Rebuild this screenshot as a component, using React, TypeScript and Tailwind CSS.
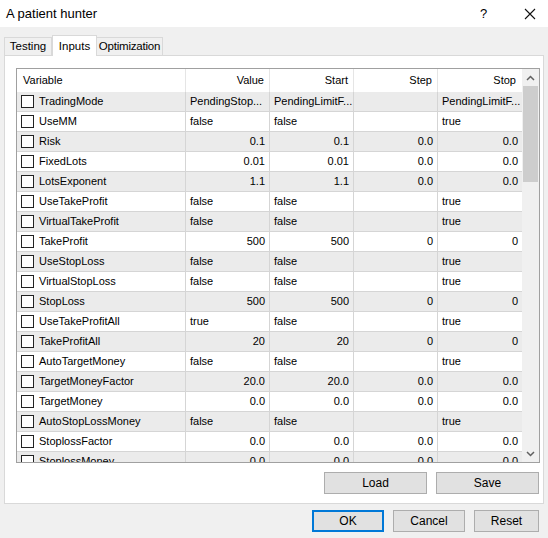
import React from "react";

type Row = [string, string, string, string, string];

const rows: Row[] = [
  ["TradingMode", "PendingStop...", "PendingLimitF...", "", "PendingLimitF..."],
  ["UseMM", "false", "false", "", "true"],
  ["Risk", "0.1", "0.1", "0.0", "0.0"],
  ["FixedLots", "0.01", "0.01", "0.0", "0.0"],
  ["LotsExponent", "1.1", "1.1", "0.0", "0.0"],
  ["UseTakeProfit", "false", "false", "", "true"],
  ["VirtualTakeProfit", "false", "false", "", "true"],
  ["TakeProfit", "500", "500", "0", "0"],
  ["UseStopLoss", "false", "false", "", "true"],
  ["VirtualStopLoss", "false", "false", "", "true"],
  ["StopLoss", "500", "500", "0", "0"],
  ["UseTakeProfitAll", "true", "false", "", "true"],
  ["TakeProfitAll", "20", "20", "0", "0"],
  ["AutoTargetMoney", "false", "false", "", "true"],
  ["TargetMoneyFactor", "20.0", "20.0", "0.0", "0.0"],
  ["TargetMoney", "0.0", "0.0", "0.0", "0.0"],
  ["AutoStopLossMoney", "false", "false", "", "true"],
  ["StoplossFactor", "0.0", "0.0", "0.0", "0.0"],
  ["StoplossMoney", "0.0", "0.0", "0.0", "0.0"],
];

const isNum = (v: string) => /^[0-9.]+$/.test(v);

function Cell({ v, w, last }: { v: string; w: string; last?: boolean }) {
  return (
    <div
      className={`${w} shrink-0 h-full flex items-center px-[4px] overflow-hidden whitespace-nowrap ${
        last ? "" : "border-r border-[#d5d5d5]"
      } ${isNum(v) ? "justify-end" : "justify-start"}`}
    >
      {v}
    </div>
  );
}

function Btn({ label, primary, w }: { label: string; primary?: boolean; w: string }) {
  return (
    <button
      className={`${w} h-[22px] flex items-center justify-center bg-[#e1e1e1] text-[12px] text-black ${
        primary ? "border-2 border-[#0078d7]" : "border border-[#adadad]"
      }`}
    >
      {label}
    </button>
  );
}

export default function App() {
  return (
    <div
      className="w-[548px] h-[538px] bg-[#f0f0f0] flex flex-col text-black overflow-hidden"
      style={{ fontFamily: '"Liberation Sans", Arial, sans-serif' }}
    >
      {/* title bar */}
      <div className="h-[27px] bg-white flex items-center pl-[6px] pr-[12px] text-[13px]">
        <span className="flex-1">A patient hunter</span>
        <span className="w-[10px] mr-[34px] text-[13px]">?</span>
        <svg width="12" height="12" viewBox="0 0 12 12">
          <path d="M1 1 L11 11 M11 1 L1 11" stroke="#111" strokeWidth="1.1" />
        </svg>
      </div>

      {/* tabs */}
      <div className="h-[28px] flex items-end pl-[4px] text-[11.5px]">
        <div className="w-[48px] h-[18px] flex items-center justify-center bg-[#f0f0f0] border border-b-0 border-[#d9d9d9]">
          Testing
        </div>
        <div className="w-[45px] h-[21px] flex items-start pt-[2px] justify-center bg-white border border-b-0 border-[#d9d9d9] relative top-[1px] z-10">
          Inputs
        </div>
        <div className="w-[66px] h-[18px] flex items-center justify-center bg-[#f0f0f0] border border-b-0 border-l-0 border-[#d9d9d9] tracking-[-0.2px]">
          Optimization
        </div>
      </div>

      {/* panel */}
      <div className="mx-[4px] h-[449px] bg-white border border-[#d9d9d9] flex flex-col pl-[11px] pr-[3px] pt-[12px]">
        <div className="w-[524px] h-[395px] border border-[#a0a0a0] flex text-[11px]">
          <div className="flex-1 flex flex-col overflow-hidden">
            <div className="h-[23px] shrink-0 flex bg-white">
              <div className="w-[169px] shrink-0 border-r border-[#e5e5e5] flex items-center pl-[6px]">Variable</div>
              <div className="w-[84px] shrink-0 border-r border-[#e5e5e5] flex items-center justify-end pr-[5px]">Value</div>
              <div className="w-[84px] shrink-0 border-r border-[#e5e5e5] flex items-center justify-end pr-[5px]">Start</div>
              <div className="w-[84px] shrink-0 border-r border-[#e5e5e5] flex items-center justify-end pr-[5px]">Step</div>
              <div className="w-[84px] shrink-0 flex items-center justify-end pr-[6px]">Stop</div>
            </div>
            {rows.map((r, i) => (
              <div
                key={r[0]}
                className={`h-[20px] shrink-0 flex border-b border-[#d5d5d5] ${i % 2 === 0 ? "bg-[#ebebeb]" : "bg-white"}`}
              >
                <div className="w-[169px] shrink-0 h-full flex items-center pl-[4px] border-r border-[#d5d5d5]">
                  <div className="w-[13px] h-[13px] border border-[#222] bg-white mr-[5px]" />
                  <span>{r[0]}</span>
                </div>
                <Cell v={r[1]} w="w-[84px]" />
                <Cell v={r[2]} w="w-[84px]" />
                <Cell v={r[3]} w="w-[84px]" />
                <Cell v={r[4]} w="w-[84px]" last />
              </div>
            ))}
          </div>
          {/* scrollbar */}
          <div className="w-[17px] shrink-0 bg-[#f0f0f0] flex flex-col">
            <div className="h-[17px] flex items-center justify-center">
              <svg width="9" height="6" viewBox="0 0 9 6">
                <path d="M1 5 L4.5 1.5 L8 5" stroke="#606060" strokeWidth="1.5" fill="none" />
              </svg>
            </div>
            <div className="mx-[1px] h-[96px] bg-[#cdcdcd]" />
            <div className="flex-1" />
            <div className="h-[17px] flex items-center justify-center">
              <svg width="9" height="6" viewBox="0 0 9 6">
                <path d="M1 1 L4.5 4.5 L8 1" stroke="#606060" strokeWidth="1.5" fill="none" />
              </svg>
            </div>
          </div>
        </div>
        <div className="flex justify-end gap-[9px] mt-[9px] pr-[1px]">
          <Btn label="Load" w="w-[103px]" />
          <Btn label="Save" w="w-[103px]" />
        </div>
      </div>

      {/* footer */}
      <div className="flex justify-end gap-[9px] pr-[9px] mt-[6px]">
        <Btn label="OK" primary w="w-[72px]" />
        <Btn label="Cancel" w="w-[72px]" />
        <Btn label="Reset" w="w-[65px]" />
      </div>
    </div>
  );
}
